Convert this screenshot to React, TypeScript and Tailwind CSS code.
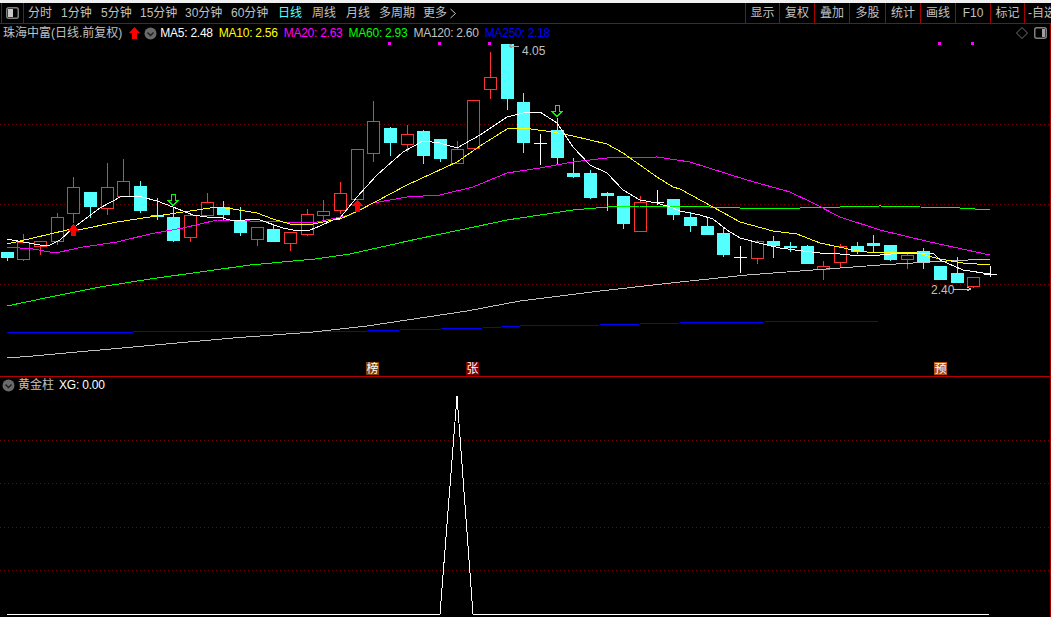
import React from "react";

type K = "c" | "r" | "w";
// [x, bodyTop, bodyBottom, high, low, kind]
const candles: [number, number, number, number, number, K][] = [
  [7, 252, 258, 252, 261, "c"], [23, 242, 259, 234, 261, "r"], [40, 241, 246, 241, 255, "r"], [57, 217, 241, 213, 245, "r"],
  [73, 187, 213, 177, 223, "r"], [90, 192, 207, 192, 218, "c"], [107, 187, 208, 163, 215, "r"], [123, 181, 196, 159, 196, "r"],
  [140, 186, 211, 181, 213, "c"], [157, 215, 217, 198, 220, "c"], [173, 217, 241, 207, 242, "c"], [190, 215, 237, 215, 242, "r"],
  [207, 202, 215, 193, 215, "r"], [223, 207, 215, 201, 220, "c"], [240, 221, 233, 207, 236, "c"], [257, 227, 239, 227, 246, "r"],
  [273, 229, 242, 224, 242, "c"], [290, 232, 243, 232, 251, "r"], [307, 214, 234, 209, 236, "r"], [323, 211, 215, 200, 221, "r"],
  [340, 193, 210, 182, 214, "r"], [357, 149, 199, 149, 199, "r"], [373, 121, 153, 101, 162, "r"], [390, 128, 143, 127, 156, "c"],
  [407, 134, 144, 125, 152, "r"], [423, 131, 156, 130, 164, "c"], [440, 139, 159, 139, 162, "c"], [457, 149, 163, 141, 163, "r"],
  [473, 100, 148, 100, 148, "r"], [490, 77, 89, 52, 99, "r"], [507, 44, 99, 44, 110, "c"], [523, 102, 143, 93, 153, "c"],
  [540, 143, 143, 134, 165, "w"], [557, 130, 158, 118, 164, "c"], [573, 173, 177, 158, 178, "c"], [590, 173, 198, 170, 199, "c"],
  [607, 193, 196, 192, 211, "c"], [623, 196, 224, 196, 229, "c"], [640, 202, 231, 196, 231, "r"], [657, 202, 202, 190, 205, "w"],
  [673, 199, 215, 199, 220, "c"], [690, 217, 226, 212, 232, "c"], [707, 226, 235, 217, 235, "c"], [723, 233, 255, 227, 257, "c"],
  [740, 257, 257, 246, 273, "w"], [757, 241, 258, 240, 264, "r"], [773, 241, 246, 236, 258, "c"], [790, 246, 248, 242, 252, "c"],
  [807, 246, 264, 245, 264, "c"], [823, 266, 269, 261, 280, "r"], [840, 246, 262, 244, 267, "r"], [857, 246, 252, 242, 254, "c"],
  [873, 243, 246, 235, 252, "c"], [890, 245, 260, 245, 261, "c"], [907, 255, 259, 252, 269, "r"], [923, 251, 262, 248, 269, "c"],
  [940, 266, 280, 266, 280, "c"], [957, 273, 283, 257, 283, "c"], [973, 277, 286, 277, 288, "r"], [990, 274, 274, 266, 277, "w"],
];

const ma5 = "7,239 23,242 40,245 50,245 60,240 73,228 100,208 122,196 142,197 157,201 173,207 193,215 207,217 223,218 233,221 257,219 283,228 293,230 310,230 320,226 333,220 340,218 357,197 377,175 403,152 423,141 440,143 457,148 480,135 507,117 523,113 540,112 557,123 573,147 590,165 607,173 623,190 640,200 657,203 673,208 680,211 700,215 713,219 727,230 740,238 763,244 780,248 803,251 820,253 840,254 850,255 880,255 903,253 933,253 940,260 963,270 990,274";
const ma10 = "7,244 33,238 67,230 83,229 117,222 150,217 183,212 217,207 233,209 257,213 273,219 290,224 313,224 333,220 340,219 360,210 407,185 457,162 480,146 507,129 523,128 553,132 573,136 607,144 623,153 640,165 657,177 673,187 680,189 713,207 740,222 773,231 797,234 820,243 853,250 867,252 913,252 940,259 963,263 990,265";
const ma20 = "7,247 33,249 50,252 60,252 83,247 117,242 150,234 183,228 217,220 250,221 283,222 317,222 350,215 373,203 407,197 440,195 473,187 507,173 540,168 573,162 607,158 657,157 690,162 747,180 790,192 813,203 840,217 880,230 930,242 990,255";
const ma60 = "7,306 50,297 100,287 150,279 200,272 250,265 315,259 350,254 417,239 460,230 507,220 573,210 607,207 640,206 680,206 740,208 800,208 880,206 960,208 990,210";
const ma120 = "7,358 33,356 133,347 233,338 313,332 367,326 467,311 520,301 600,291 680,282 747,275 813,270 880,265 913,263 947,261 990,259";
const ma250 = "7,332 133,332 313,331 367,331 400,330 483,328 520,326 600,325 680,323 765,322 880,321 990,321";

const maLabels = [
  ["MA5: 2.48", "text-white"],
  ["MA10: 2.56", "text-[#ffff00]"],
  ["MA20: 2.63", "text-[#ff00ff]"],
  ["MA60: 2.93", "text-[#00ff00]"],
  ["MA120: 2.60", "text-[#c0c0c0]"],
  ["MA250: 2.18", "text-[#0000ff]"],
];

const leftTabs = [
  ["分时", "w-[33px]"], ["1分钟", "w-[40px]"], ["5分钟", "w-[39px]"], ["15分钟", "w-[45px]"], ["30分钟", "w-[46px]"],
  ["60分钟", "w-[47px]"], ["日线", "w-[34px] text-[#54ffff]"], ["周线", "w-[34px]"], ["月线", "w-[33px]"], ["多周期", "w-[44px]"],
];
const rightTabs = [
  ["显示", "w-[34px]"], ["复权", "w-[35px]"], ["叠加", "w-[35px]"], ["多股", "w-[36px]"], ["统计", "w-[35px]"],
  ["画线", "w-[35px]"], ["F10", "w-[35px]"], ["标记", "w-[34px]"],
];

const Chevron = () => (
  <svg width="13" height="13" viewBox="0 0 13 13" className="shrink-0">
    <circle cx="6.5" cy="6.5" r="6" fill="#6a6a6a" />
    <path d="M3.5 5.5 L6.5 8.5 L9.5 5.5" fill="none" stroke="#1c1c1c" strokeWidth="1.4" />
  </svg>
);

const PanelIcon = () => (
  <svg width="13" height="12" viewBox="0 0 13 12" className="shrink-0">
    <rect x="0.75" y="0.75" width="11.5" height="10.5" rx="2" fill="none" stroke="#808080" strokeWidth="1.5" />
    <rect x="8" y="2" width="3" height="8" fill="#a0a0a0" />
  </svg>
);

const Dotted = ({ y }: { y: number }) => (
  <line x1="0" x2="1050" y1={y + 0.5} y2={y + 0.5} stroke="#800000" strokeDasharray="1 3" />
);

const Badge = ({ c, cls }: { c: string; cls: string }) => (
  <span className={`absolute top-[338px] flex h-[13px] w-[13px] items-center justify-center text-[12px] leading-none text-white ${cls}`}>{c}</span>
);

export default function App() {
  return (
    <div className="flex h-[617px] w-[1051px] flex-col overflow-hidden bg-black text-[12px] text-[#c0c0c0] font-['Liberation_Sans','Noto_Sans_CJK_SC',sans-serif]">
      <div className="h-[3px] shrink-0 bg-[#f0f0f0]" />
      {/* toolbar */}
      <div className="flex h-[21px] shrink-0 items-center border-b border-[#a80000] leading-[20px]">
        <div className="ml-[1px] flex h-full w-[23px] shrink-0 items-center justify-center border-x border-[#a80000]">
          <svg width="13" height="12" viewBox="0 0 13 12">
            <rect x="0.75" y="0.75" width="11.5" height="10.5" rx="2" fill="none" stroke="#808080" strokeWidth="1.5" />
            <rect x="2" y="2" width="5" height="8" fill="#c8c8c8" />
          </svg>
        </div>
        <div className="ml-[4px] flex h-full items-center whitespace-nowrap">
          {leftTabs.map(([t, c]) => (
            <span key={t} className={c}>{t}</span>
          ))}
          <span className="flex items-center gap-[2px]">
            更多
            <svg width="8" height="11" viewBox="0 0 8 11"><path d="M1.5 1 L6.5 5.5 L1.5 10" fill="none" stroke="#c0c0c0" /></svg>
          </span>
        </div>
        <div className="ml-auto flex h-full whitespace-nowrap">
          {rightTabs.map(([t, c]) => (
            <span key={t} className={`flex items-center justify-center border-l border-[#a80000] ${c}`}>{t}</span>
          ))}
          <span className="flex w-[27px] items-center overflow-hidden border-l border-[#a80000] pl-[3px]">-自选</span>
        </div>
      </div>

      {/* main chart panel */}
      <div className="relative h-[353px] shrink-0 border-r border-b border-r-[#a80000] border-b-[#b80000]">
        <div className="flex h-[18px] items-center">
          <span className="ml-[3px] whitespace-nowrap">珠海中富(日线.前复权)</span>
          <svg width="11" height="12" viewBox="0 0 11 12" className="ml-[7px] shrink-0">
            <path d="M5.5 0 L11 6 L8 6 L8 12 L3 12 L3 6 L0 6 Z" fill="#ff0000" />
          </svg>
          <span className="ml-[4px]"><Chevron /></span>
          <div className="ml-[3px] flex gap-[6px] whitespace-nowrap tracking-[-0.25px]">
            {maLabels.map(([t, c]) => (
              <span key={t} className={c}>{t}</span>
            ))}
          </div>
          <div className="ml-auto mr-[3px] flex items-center gap-[6px]">
            <svg width="12" height="12" viewBox="0 0 12 12"><path d="M6 0.5 L11.5 6 L6 11.5 L0.5 6 Z" fill="none" stroke="#707070" /></svg>
            <PanelIcon />
          </div>
        </div>
        <svg width="1050" height="334" viewBox="0 42 1050 334" shapeRendering="crispEdges" className="block">
          {[124, 204, 284].map((y) => <Dotted key={y} y={y} />)}
          {[389, 439, 489, 939, 972].map((x) => <rect key={x} x={x - 1} y={42} width={3} height={3} fill="#ff00ff" />)}
          {candles.map(([x, t, b, h, l, k]) => {
            if (k === "w")
              return (
                <g key={x} stroke="#ffffff">
                  <line x1={x + 0.5} x2={x + 0.5} y1={h} y2={l} />
                  <line x1={x - 6} x2={x + 7} y1={t + 0.5} y2={t + 0.5} />
                </g>
              );
            if (k === "c")
              return (
                <g key={x}>
                  <line x1={x + 0.5} x2={x + 0.5} y1={h} y2={l} stroke="#54ffff" />
                  <rect x={x - 6} y={t} width={13} height={Math.max(b - t, 1)} fill="#54ffff" />
                </g>
              );
            return (
              <g key={x} stroke="#ff3232">
                <line x1={x + 0.5} x2={x + 0.5} y1={h} y2={t} />
                <line x1={x + 0.5} x2={x + 0.5} y1={b} y2={l} />
                <rect x={x - 5.5} y={t + 0.5} width={12} height={b - t} fill="#000000" />
              </g>
            );
          })}
          <polyline points={ma250} fill="none" stroke="#0000ff" />
          <polyline points={ma120} fill="none" stroke="#c0c0c0" />
          <polyline points={ma60} fill="none" stroke="#00ff00" />
          <polyline points={ma20} fill="none" stroke="#ff00ff" />
          <polyline points={ma10} fill="none" stroke="#ffff00" />
          <polyline points={ma5} fill="none" stroke="#ffffff" />
          {/* signal arrows */}
          <path d="M73.5 224 L79 230.5 L76 230.5 L76 236 L71 236 L71 230.5 L68 230.5 Z" fill="#ff0000" stroke="none" />
          <path d="M357.5 200 L363 206 L360 206 L360 212 L355 212 L355 206 L352 206 Z" fill="#ff0000" stroke="none" />
          <path d="M171 194.5 L175 194.5 L175 200.5 L178 200.5 L173 205.5 L168 200.5 L171 200.5 Z" fill="#000000" stroke="#00ff00" />
          <path d="M555 105.5 L559 105.5 L559 111.5 L562 111.5 L557 116.5 L552 111.5 L555 111.5 Z" fill="#000000" stroke="#00ff00" />
          {/* annotations */}
          <path d="M509 46 L519 46 M509 46 L512 44 M509 46 L512 48" fill="none" stroke="#a0a0a0" />
          <text x="522" y="55" fill="#c0c0c0" fontSize="12" fontFamily="Liberation Sans">4.05</text>
          <text x="931" y="294" fill="#c0c0c0" fontSize="12" fontFamily="Liberation Sans">2.40</text>
          <path d="M953 289 L971 289 M971 289 L967 287 M971 289 L967 291" fill="none" stroke="#c0c0c0" />
        </svg>
        <Badge c="榜" cls="left-[366px] bg-[#804000]" />
        <Badge c="张" cls="left-[466px] bg-[#800000]" />
        <Badge c="预" cls="left-[934px] bg-[#b05014]" />
      </div>

      {/* lower indicator panel */}
      <div className="flex min-h-0 flex-1 flex-col border-r border-[#a80000]">
        <div className="flex h-[16px] shrink-0 items-center">
          <span className="ml-[2px]"><Chevron /></span>
          <span className="ml-[3px]">黄金柱</span>
          <span className="ml-[5px] tracking-[-0.2px] text-white">XG: 0.00</span>
        </div>
        <svg width="1050" height="224" viewBox="0 393 1050 224" shapeRendering="crispEdges" className="block">
          {[440, 483, 527, 570].map((y) => <Dotted key={y} y={y} />)}
          <polyline points="7,614 440,614 457,396 473,614 989,614" fill="none" stroke="#ffffff" />
        </svg>
      </div>
    </div>
  );
}
